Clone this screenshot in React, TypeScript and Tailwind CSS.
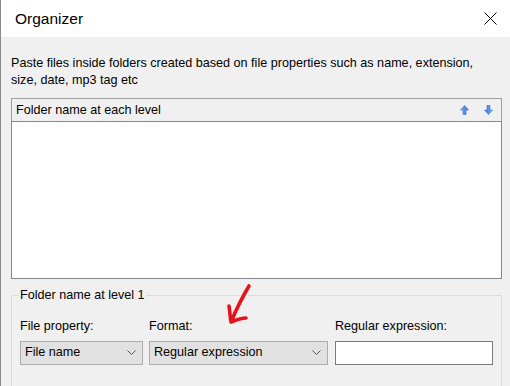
export default function App() {
  return (
    <div className="relative w-[510px] h-[386px] overflow-hidden bg-[#f0f0f0] border-l border-[#8a8a8a] font-['Liberation_Sans',Arial,sans-serif] text-[12.6px] text-black">
      <div className="h-[37px] bg-white flex items-center justify-between pl-[14px] pr-[13px]">
        <span className="text-[15.5px]">Organizer</span>
        <svg width="13" height="13" viewBox="0 0 13 13">
          <path d="M0.5 0.5 L12.5 12.5 M12.5 0.5 L0.5 12.5" stroke="#000" strokeWidth="1" />
        </svg>
      </div>

      <div className="px-[10px]">
        <p className="pt-[18px] leading-[17px]">
          Paste files inside folders created based on file properties such as name, extension,
          size, date, mp3 tag etc
        </p>

        <div className="mt-[9px] w-[491px]">
          <div className="h-[23px] flex items-center justify-between pl-[4px] pr-[8px] border border-b-0 border-[#a0a0a0] bg-[#f0f0f0]">
            <span>Folder name at each level</span>
            <div className="flex items-center gap-[15px]">
              <ArrowIcon up />
              <ArrowIcon />
            </div>
          </div>
          <div className="h-[158px] bg-white border border-[#828790]"></div>
        </div>

        <fieldset className="mt-[7px] w-[491px] h-[120px] border border-[#dcdcdc] pl-[8px] pt-[12px]">
          <legend className="ml-[-1px] px-[1px]">Folder name at level 1</legend>
          <div className="flex gap-[6px]">
            <div className="w-[123px] flex flex-col gap-[5px]">
              <span>File property:</span>
              <Combo value="File name" />
            </div>
            <div className="w-[179px] flex flex-col gap-[5px]">
              <span>Format:</span>
              <Combo value="Regular expression" />
            </div>
            <div className="ml-[1px] w-[158px] flex flex-col gap-[5px]">
              <span>Regular expression:</span>
              <div className="h-[24px] bg-white border border-[#7a7a7a]"></div>
            </div>
          </div>
        </fieldset>
      </div>

      <svg className="absolute left-[220px] top-[280px]" width="36" height="50" viewBox="0 0 36 50">
        <path
          d="M28 6 C 22 16, 15 30, 10 42 M8 26 C 9 32, 9 37, 10 42 C 15 40, 20 38, 25 38"
          stroke="#e3151b"
          strokeWidth="3.6"
          fill="none"
          strokeLinecap="round"
          strokeLinejoin="round"
        />
      </svg>
    </div>
  );
}

function Combo({ value }: { value: string }) {
  return (
    <div className="h-[24px] flex items-center justify-between pl-[4px] pr-[6px] bg-[#e1e1e1] border border-[#adadad]">
      <span>{value}</span>
      <svg width="9" height="5" viewBox="0 0 9 5">
        <path d="M0.5 0.5 L4.5 4.5 L8.5 0.5" stroke="#555" strokeWidth="1" fill="none" />
      </svg>
    </div>
  );
}

function ArrowIcon({ up = false }: { up?: boolean }) {
  return (
    <svg width="9" height="10" viewBox="0 0 9 10" className={up ? '' : 'rotate-180'}>
      <defs>
        <linearGradient id={up ? 'gu' : 'gd'} x1="0" y1="0" x2="1" y2="0">
          <stop offset="0" stopColor="#7fb2f5" />
          <stop offset="1" stopColor="#2f6fd8" />
        </linearGradient>
      </defs>
      <path d="M4.5 0.5 L8.5 5 L6 5 L6 9.5 L3 9.5 L3 5 L0.5 5 Z" fill={`url(#${up ? 'gu' : 'gd'})`} stroke="#3b74d0" strokeWidth="0.6" />
    </svg>
  );
}
